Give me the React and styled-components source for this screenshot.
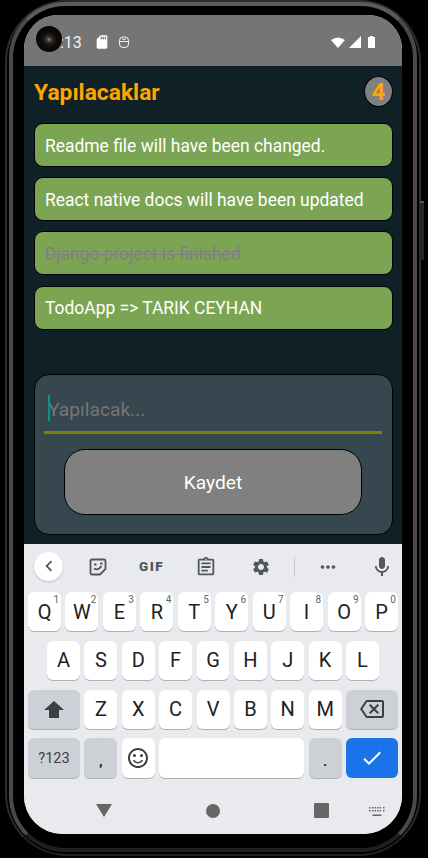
import styled, { createGlobalStyle } from "styled-components";
import {
  MdSdCard,
  MdSettings,
  MdMic,
  MdOutlineBackspace,
  MdCheck,
  MdOutlineSentimentSatisfied,
  MdMoreHoriz,
  MdChevronLeft,
  MdOutlineAssignment,
} from "react-icons/md";

const GlobalStyle = createGlobalStyle`
  html, body {
    margin: 0;
    padding: 0;
    background: #000;
  }
  * {
    box-sizing: border-box;
  }
`;

const Page = styled.div`
  width: 428px;
  height: 858px;
  background: #000;
  padding: 0 7px 2px 5px;
  font-family: Roboto, "Liberation Sans", sans-serif;
  overflow: hidden;
`;
const Body = styled.div`
  position: relative;
  height: 856px;
  border: 2px solid #2c2c2c;
  border-bottom-color: #222;
  border-radius: 62px;
  padding: 0 2px 2px 2px;
`;
const SideButton = styled.div`
  position: absolute;
  right: -5px;
  top: 199px;
  width: 4px;
  height: 59px;
  background: #262626;
  border-top: 2px solid #555;
`;
const Rim = styled.div`
  height: 100%;
  border-style: solid;
  border-width: 4px;
  border-color: #5c5c5c #4a4a4a #1f1f1f #4a4a4a;
  border-radius: 56px;
  background: #000;
  padding: 9px 10px 12px 11px;
`;
const Screen = styled.div`
  position: relative;
  height: 819px;
  width: 378px;
  border-radius: 34px 34px 38px 38px;
  overflow: hidden;
  display: flex;
  flex-direction: column;
  background: #e8eaed;
`;
const Camera = styled.div`
  position: absolute;
  left: 12px;
  top: 11px;
  width: 26px;
  height: 26px;
  border-radius: 50%;
  background: radial-gradient(circle at 50% 52%, #b89a70 0, #4a3a34 2px, #1c1a1c 5px, #0b0b0b 8px, #050505 13px);
`;

const StatusBar = styled.div`
  flex: 0 0 51px;
  background: #757575;
  display: flex;
  align-items: center;
  padding: 3px 27px 0 27px;
  color: #f2f2f2;
  font-size: 16px;
`;
const StatusTime = styled.span`
  width: 33.5px;
`;
const StatusLeft = styled.div`
  display: flex;
  align-items: center;
  gap: 9px;
  flex: 1;
`;
const StatusRight = styled.div`
  display: flex;
  align-items: center;
  gap: 4px;
`;

const Main = styled.div`
  flex: 0 0 478px;
  background: #102027;
  padding: 10px 9px 9px 10px;
  display: flex;
  flex-direction: column;
`;
const Header = styled.div`
  display: flex;
  align-items: center;
  justify-content: space-between;
  height: 31px;
  margin-bottom: 16px;
`;
const Title = styled.span`
  color: #ffa500;
  font-weight: 700;
  font-size: 22.8px;
  padding-top: 1px;
`;
const Badge = styled.span`
  width: 29px;
  height: 31px;
  border-radius: 50%;
  border: 1px solid #000;
  background: #808080;
  color: #ffa500;
  font-weight: 700;
  font-size: 24px;
  display: flex;
  align-items: center;
  justify-content: center;
`;
const TodoList = styled.div`
  display: flex;
  flex-direction: column;
  gap: 10.2px;
`;
const Todo = styled.div`
  height: 44px;
  border: 1px solid #000;
  border-radius: 9px;
  background: #7ca553;
  padding: 1px 0 0 10px;
  display: flex;
  align-items: center;
  font-size: 17.45px;
  color: ${(p) => (p.$done ? "#808080" : "#fff")};
  text-decoration: ${(p) => (p.$done ? "line-through" : "none")};
`;
const Form = styled.div`
  margin-top: auto;
  height: 161px;
  border: 1px solid #000;
  border-radius: 15px;
  background: #37474f;
  padding: 15px 10px 0 9px;
`;
const InputRow = styled.div`
  height: 44px;
  border-bottom: 3px solid #808000;
  display: flex;
  align-items: flex-start;
  padding-left: 4px;
  padding-top: 5px;
`;
const Caret = styled.span`
  width: 2px;
  height: 26px;
  background: #009688;
  margin-right: -2px;
`;
const Placeholder = styled.span`
  color: #757575;
  font-size: 19.2px;
  line-height: 27px;
  margin-top: 1px;
`;
const SaveButton = styled.button`
  display: block;
  width: 298px;
  height: 66px;
  margin: 15px 0 0 20px;
  border: 1px solid #000;
  border-radius: 21px;
  background: #808080;
  color: #fff;
  font-family: inherit;
  font-size: 19.2px;
`;

const Keyboard = styled.div`
  flex: 1;
  background: #e8eaed;
  display: flex;
  flex-direction: column;
`;
const Toolbar = styled.div`
  height: 48px;
  display: grid;
  grid-template-columns: 49px 50px 57px 52px 58px 9px 58px 50px;
  align-items: center;
  justify-items: center;
  color: #53565a;
`;
const BackButton = styled.div`
  width: 29px;
  height: 29px;
  border-radius: 50%;
  background: #fff;
  box-shadow: 0 1px 2px rgba(0, 0, 0, 0.2);
  display: flex;
  align-items: center;
  justify-content: center;
  margin-top: -4px;
`;
const ToolIcon = styled.div`
  display: flex;
  margin-top: -3px;
`;
const GifLabel = styled.span`
  font-size: 13.5px;
  font-weight: 900;
  letter-spacing: 1.4px;
  margin-top: -5px;
`;
const Divider = styled.div`
  width: 1px;
  height: 20px;
  background: #c4c6ca;
  margin-top: -3px;
`;
const Rows = styled.div`
  display: flex;
  flex-direction: column;
  gap: 9.4px;
  padding: 0 4px;
`;
const Row = styled.div`
  display: flex;
  gap: 4.4px;
  height: 39.4px;
  padding: 0 ${(p) => p.$inset || 0}px;
`;
const Key = styled.div`
  position: relative;
  flex: ${(p) => p.$flex || "1 1 0"};
  border-radius: 6px;
  background: ${(p) =>
    p.$variant === "mod" ? "#cdd0d6" : p.$variant === "action" ? "#1a73e8" : "#fff"};
  box-shadow: ${(p) =>
    p.$variant === "action" ? "none" : "0 1px 0 #aeb0b5"};
  color: ${(p) => (p.$variant === "mod" ? "#3c4043" : "#202124")};
  display: flex;
  align-items: center;
  justify-content: center;
  font-size: 20px;
`;
const KeyHint = styled.span`
  position: absolute;
  top: 2px;
  right: 2px;
  font-size: 10px;
  color: #5f6368;
`;
const SmallLabel = styled.span`
  font-size: 14.5px;
`;
const PunctLabel = styled.span`
  font-size: 13px;
  font-weight: 700;
  color: #000;
  margin-top: 6px;
`;

const NavBar = styled.div`
  flex: 1;
  display: grid;
  grid-template-columns: 109px 109px 109px 1fr;
  padding: 10px 0 0 25px;
  align-items: center;
  justify-items: center;
`;
const NavTriangle = styled.div`
  width: 0;
  height: 0;
  border-left: 8px solid transparent;
  border-right: 8px solid transparent;
  border-top: 13px solid #666;
  margin-top: -1px;
`;
const NavCircle = styled.div`
  width: 14px;
  height: 14px;
  border-radius: 50%;
  background: #666;
`;
const NavSquare = styled.div`
  width: 15px;
  height: 15px;
  border-radius: 1px;
  background: #666;
`;
const NavKeyboard = styled.div`
  display: flex;
  justify-self: start;
  margin: 2px 0 0 -7px;
`;

const row1 = [
  ["Q", "1"],
  ["W", "2"],
  ["E", "3"],
  ["R", "4"],
  ["T", "5"],
  ["Y", "6"],
  ["U", "7"],
  ["I", "8"],
  ["O", "9"],
  ["P", "0"],
];
const row2 = ["A", "S", "D", "F", "G", "H", "J", "K", "L"];
const row3 = ["Z", "X", "C", "V", "B", "N", "M"];

const todos = [
  { text: "Readme file will have been changed." },
  { text: "React native docs will have been updated" },
  { text: "Django project is finished", done: true },
  { text: "TodoApp => TARIK CEYHAN" },
];

const WifiIcon = () => (
  <svg width="14" height="11" viewBox="0 0 14 11">
    <path d="M0 3 Q7 -2 14 3 L7 11 Z" fill="#fff" />
  </svg>
);
const SignalIcon = () => (
  <svg width="12" height="12" viewBox="0 0 12 12">
    <path d="M12 0 V12 H0 Z" fill="#fff" />
  </svg>
);
const BatteryIcon = () => (
  <svg width="7" height="12" viewBox="0 0 7 12" style={{ marginLeft: 3 }}>
    <path d="M2 0 H5 V1 H7 V12 H0 V1 H2 Z" fill="#fff" />
  </svg>
);
const DebugIcon = () => (
  <svg width="10" height="12" viewBox="0 0 10 12" fill="none" stroke="#f2f2f2" strokeWidth="1">
    <rect x="0.5" y="1" width="9" height="10.5" rx="3.5" />
    <path d="M0.5 5.5 H9.5 M3 3.2 H7" />
  </svg>
);
const StickerIcon = () => (
  <svg width="18" height="18" viewBox="0 0 18 18" fill="none" stroke="#53565a" strokeWidth="1.8">
    <path d="M3 1.5 H15 Q16.5 1.5 16.5 3 V11 L11 16.5 H3 Q1.5 16.5 1.5 15 V3 Q1.5 1.5 3 1.5 Z" />
    <path d="M5 10.5 Q9 13 12.5 8" />
    <path d="M5 6.5 H7.5 M11 5.5 H13.5" />
  </svg>
);
const ShiftIcon = () => (
  <svg width="20" height="17" viewBox="0 0 20 17">
    <path d="M10 0 L20 9 H15 V17 H5 V9 H0 Z" fill="#3c4043" />
  </svg>
);
const KeyboardHideIcon = () => (
  <svg width="16" height="9" viewBox="0 0 16 9" fill="#666">
    <path d="M0 0h1.5v1.5H0zM3 0h1.5v1.5H3zM5.5 0H7v1.5H5.5zM8 0h1.5v1.5H8zM10.5 0H12v1.5h-1.5zM14 0h1.5v1.5H14zM0 3h1.5v1.5H0zM3 3h1.5v1.5H3zM5.5 3H7v1.5H5.5zM8 3h1.5v1.5H8zM10.5 3H12v1.5h-1.5zM14 3h1.5v1.5H14zM3.5 7.5h9V9h-9z" />
  </svg>
);

const App = () => {
  return (
    <Page>
      <GlobalStyle />
      <Body>
        <SideButton />
        <Rim>
          <Screen>
            <StatusBar>
              <StatusLeft>
                <StatusTime>1:13</StatusTime>
                <MdSdCard size={16} color="#fff" />
                <DebugIcon />
              </StatusLeft>
              <StatusRight>
                <WifiIcon />
                <SignalIcon />
                <BatteryIcon />
              </StatusRight>
            </StatusBar>
            <Camera />
            <Main>
              <Header>
                <Title>Yapılacaklar</Title>
                <Badge>4</Badge>
              </Header>
              <TodoList>
                {todos.map((todo) => (
                  <Todo key={todo.text} $done={todo.done}>
                    {todo.text}
                  </Todo>
                ))}
              </TodoList>
              <Form>
                <InputRow>
                  <Caret />
                  <Placeholder>Yapılacak...</Placeholder>
                </InputRow>
                <SaveButton>Kaydet</SaveButton>
              </Form>
            </Main>
            <Keyboard>
              <Toolbar>
                <BackButton>
                  <MdChevronLeft size={22} color="#53565a" />
                </BackButton>
                <ToolIcon>
                  <StickerIcon />
                </ToolIcon>
                <GifLabel>GIF</GifLabel>
                <ToolIcon>
                  <MdOutlineAssignment size={22} />
                </ToolIcon>
                <ToolIcon>
                  <MdSettings size={20} />
                </ToolIcon>
                <Divider />
                <ToolIcon>
                  <MdMoreHoriz size={22} />
                </ToolIcon>
                <ToolIcon>
                  <MdMic size={24} />
                </ToolIcon>
              </Toolbar>
              <Rows>
                <Row>
                  {row1.map(([letter, hint]) => (
                    <Key key={letter}>
                      {letter}
                      <KeyHint>{hint}</KeyHint>
                    </Key>
                  ))}
                </Row>
                <Row $inset={19}>
                  {row2.map((letter) => (
                    <Key key={letter}>{letter}</Key>
                  ))}
                </Row>
                <Row>
                  <Key $variant="mod" $flex="0 0 52px">
                    <ShiftIcon />
                  </Key>
                  {row3.map((letter) => (
                    <Key key={letter}>{letter}</Key>
                  ))}
                  <Key $variant="mod" $flex="0 0 52px">
                    <MdOutlineBackspace size={24} />
                  </Key>
                </Row>
                <Row>
                  <Key $variant="mod" $flex="0 0 52px">
                    <SmallLabel>?123</SmallLabel>
                  </Key>
                  <Key $variant="mod" $flex="0 0 33px">
                    <PunctLabel>,</PunctLabel>
                  </Key>
                  <Key $flex="0 0 33px">
                    <MdOutlineSentimentSatisfied size={24} color="#3c4043" />
                  </Key>
                  <Key />
                  <Key $variant="mod" $flex="0 0 33px">
                    <PunctLabel>.</PunctLabel>
                  </Key>
                  <Key $variant="action" $flex="0 0 52px">
                    <MdCheck size={24} color="#fff" />
                  </Key>
                </Row>
              </Rows>
              <NavBar>
                <NavTriangle />
                <NavCircle />
                <NavSquare />
                <NavKeyboard>
                  <KeyboardHideIcon />
                </NavKeyboard>
              </NavBar>
            </Keyboard>
          </Screen>
        </Rim>
      </Body>
    </Page>
  );
};

export default App;
